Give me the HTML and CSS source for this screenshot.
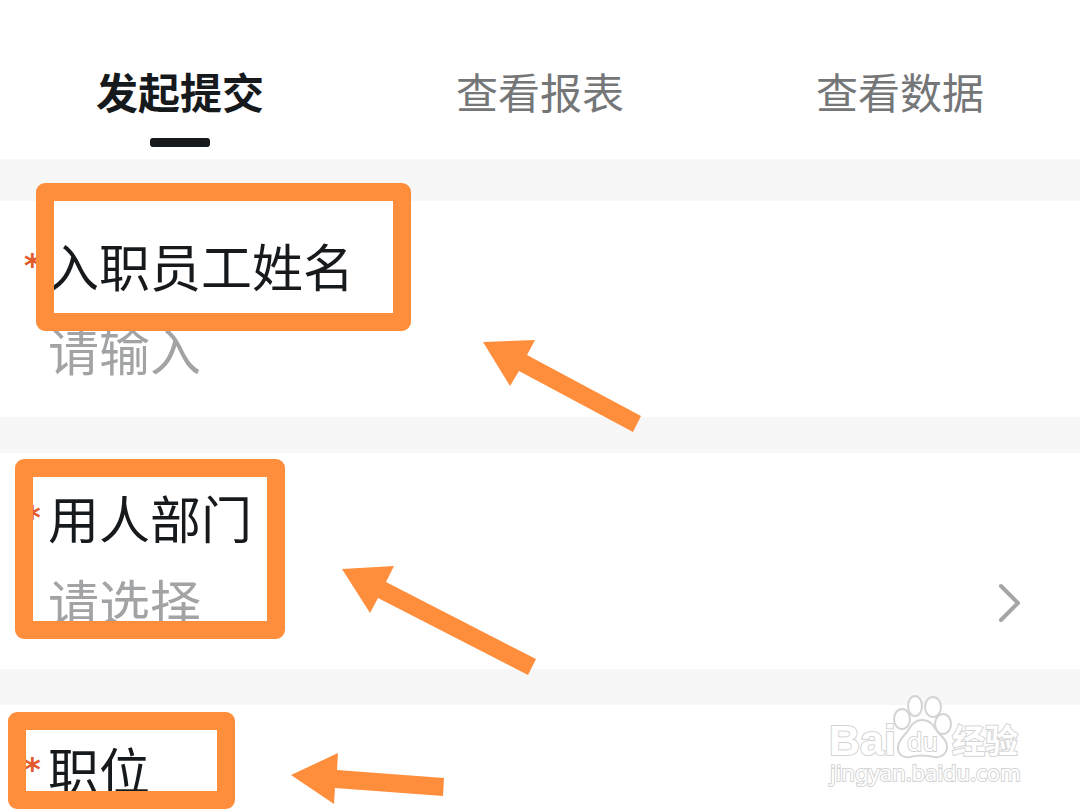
FILE: index.html
```html
<!DOCTYPE html>
<html lang="zh-CN">
<head>
<meta charset="utf-8">
<meta name="viewport" content="width=device-width, initial-scale=1">
<title>发起提交</title>
<link rel="stylesheet" href="styles.css">
</head>
<body>
<main class="page">
  <nav class="tabs">
    <button type="button" class="tab tab-active">发起提交</button>
    <button type="button" class="tab">查看报表</button>
    <button type="button" class="tab">查看数据</button>
  </nav>
  <form class="form">
    <div class="field">
      <span class="required">*</span>
      <div class="field-body">
        <label class="label" for="name">入职员工姓名</label>
        <input class="control" id="name" type="text" placeholder="请输入">
      </div>
    </div>
    <div class="field">
      <span class="required">*</span>
      <div class="field-body">
        <span class="label" id="dept-label">用人部门</span>
        <button type="button" class="control picker" aria-labelledby="dept-label dept-value">
          <span id="dept-value">请选择</span>
          <svg class="chevron" width="24" height="44" viewBox="0 0 24 44" aria-hidden="true"><path d="M3 7 20 24 3 41"/></svg>
        </button>
      </div>
    </div>
    <div class="field field-last">
      <span class="required">*</span>
      <div class="field-body">
        <span class="label">职位</span>
      </div>
    </div>
  </form>

  <svg class="marks" aria-hidden="true">
    <g class="frames">
      <rect x="45" y="192" width="357" height="130"/>
      <rect x="24" y="468" width="252" height="162"/>
      <rect x="17" y="721" width="209" height="79"/>
    </g>
    <g class="arrows">
      <path d="M483 342 535 340 527 355 641 416 633 432 519 371 510 386Z"/>
      <path d="M342 569 394 566 386 582 536 659 528 675 378 598 370 613Z"/>
      <path d="M291 775 338 753 337 770 444 778 443 796 335 788 334 804Z"/>
    </g>
  </svg>

  <svg class="watermark" width="200" height="100" viewBox="0 0 200 100" role="img" aria-label="Baidu 经验">
    <text class="wm-brand" x="1" y="62" font-size="43">Bai</text>
    <g class="wm-paw">
      <ellipse cx="74" cy="26" rx="8" ry="10"/>
      <ellipse cx="87" cy="13" rx="7" ry="10"/>
      <ellipse cx="105" cy="14" rx="8" ry="10"/>
      <ellipse cx="115" cy="31" rx="8" ry="10"/>
      <path d="M94 27C86 27 83 33 79 39 74 45 70 48 70 55 70 62 76 65 82 64 90 62 98 62 106 64 113 65 119 61 119 54 119 47 114 44 109 38 105 32 102 27 94 27Z"/>
    </g>
    <text class="wm-du" x="79" y="58" font-size="25">du</text>
    <text class="wm-cn" x="124" y="60" font-size="33">经验</text>
    <text class="wm-url" x="2" y="88" font-size="22">jingyan.baidu.com</text>
  </svg>
</main>
</body>
</html>
```
FILE: styles.css
```css
* { box-sizing: border-box; }
body {
  margin: 0;
  background: #fff;
  color: #171a1d;
  font-family: "Noto Sans CJK SC", sans-serif;
}
button, input {
  margin: 0;
  padding: 0;
  border: 0;
  background: none;
  font: inherit;
  color: inherit;
}
.page {
  position: relative;
  min-height: 100vh;
  overflow: hidden;
}
.tabs {
  display: grid;
  grid-template-columns: repeat(3, 1fr);
  padding-top: 61px;
  height: 159px;
}
.tab {
  display: flex;
  flex-direction: column;
  align-items: center;
  font-size: 42px;
  line-height: 60px;
  color: #747677;
}
.tab-active {
  color: #171a1d;
  font-weight: 700;
}
.tab-active::after {
  content: "";
  width: 60px;
  height: 9px;
  margin-top: 17px;
  border-radius: 3px;
  background: #171a1d;
}
.form {
  display: flex;
  flex-direction: column;
  gap: 36px;
  padding-top: 42px;
  background: #f7f7f7;
}
.field {
  display: flex;
  padding: 30px 58px 34px 24px;
  background: #fff;
}
.field-last { padding-bottom: 8px; }
.required {
  width: 24px;
  font-family: "DejaVu Sans", sans-serif;
  font-size: 32px;
  font-weight: 700;
  line-height: 68px;
  color: #e2592c;
}
.field-body {
  flex: 1;
  display: flex;
  flex-direction: column;
  gap: 16px;
}
.label, .control {
  font-size: 51px;
  line-height: 68px;
}
.control {
  width: 100%;
  height: 68px;
  color: #a2a3a5;
}
.control::placeholder {
  color: #a2a3a5;
  opacity: 1;
}
.picker {
  display: flex;
  align-items: center;
  justify-content: space-between;
  text-align: left;
}
.chevron path {
  fill: none;
  stroke: #a5a5a5;
  stroke-width: 4;
  stroke-linecap: round;
  stroke-linejoin: round;
}
.marks {
  position: absolute;
  inset: 0;
  width: 100%;
  height: 100%;
  pointer-events: none;
}
.frames {
  fill: none;
  stroke: #ff8e3c;
  stroke-width: 18;
  stroke-linejoin: round;
}
.arrows { fill: #ff8e3c; }
.watermark {
  position: absolute;
  right: 52px;
  bottom: 18px;
  fill: #fff;
  stroke: #d4d4d4;
  stroke-width: 2;
  pointer-events: none;
}
.watermark text { paint-order: stroke; }
.wm-brand {
  font-family: "Liberation Sans", sans-serif;
  font-weight: 700;
}
.wm-du {
  font-family: "Noto Sans", sans-serif;
  font-weight: 400;
}
.wm-cn { font-weight: 700; }
.wm-url { font-family: "Noto Sans", sans-serif; }
```
